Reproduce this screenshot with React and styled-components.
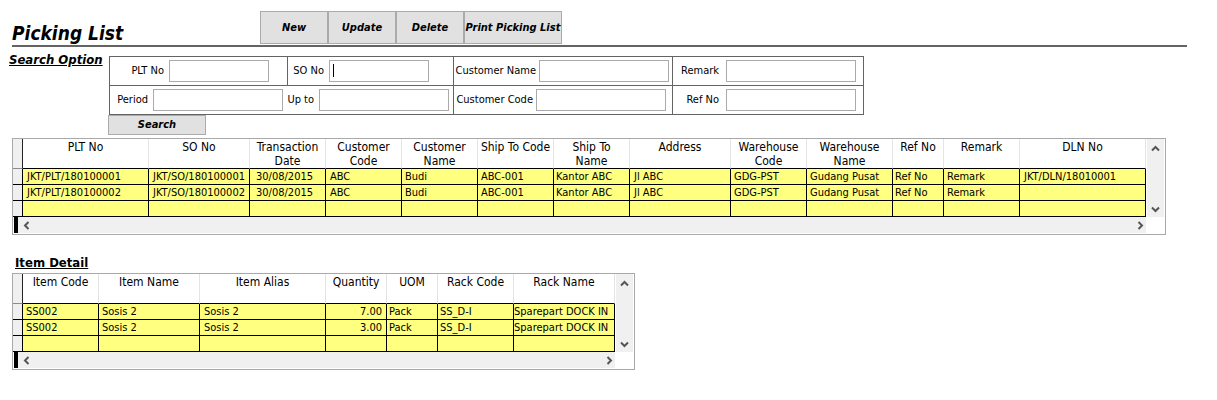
import React from "react";
import styled, { createGlobalStyle, css } from "styled-components";

const GlobalStyle = createGlobalStyle`
  *, *::before, *::after { box-sizing: border-box; }
  body {
    margin: 0;
    background: #fff;
    color: #000;
    font: 11px/14px Tahoma, "DejaVu Sans Condensed", "Noto Sans", sans-serif;
  }
  button, input { font: inherit; color: inherit; }
`;

const Page = styled.main`
  padding: 11px 30px 30px 12px;
`;

const TopBar = styled.header`
  display: flex;
  align-items: flex-end;
  padding-bottom: 1px;
  border-bottom: 2px solid #646464;
`;

const Title = styled.h1`
  width: 248px;
  margin: 0;
  font-size: 19px;
  line-height: 22px;
  font-weight: bold;
  font-style: italic;
`;

const Toolbar = styled.nav`
  display: flex;
`;

const Button = styled.button`
  width: ${(p) => (p.$wide ? 98 : 68)}px;
  height: ${(p) => (p.$short ? 20 : 33)}px;
  padding: 0;
  border: 1px solid #ababab;
  border-radius: 0;
  background: #e1e1e1;
  font-size: 11px;
  font-weight: bold;
  font-style: italic;
  white-space: nowrap;
`;

const SearchSection = styled.form`
  display: flex;
  align-items: flex-start;
  margin: 9px 0 3px;
`;

const SectionTitle = styled.h2`
  margin: 0;
  font-size: 13px;
  line-height: 16px;
  font-weight: bold;
  text-decoration: underline;
  white-space: nowrap;
`;

const SearchTitle = styled(SectionTitle)`
  width: 99px;
  margin: -4px 0 0 -3px;
  font-style: italic;
`;

const FieldGrid = styled.div`
  display: grid;
  grid-template-columns: 178px 166px 219px 191px;
  border: solid #646464;
  border-width: 1px 0 0 1px;
  margin-left: 1px;
`;

const Field = styled.div`
  display: flex;
  align-items: center;
  justify-content: flex-end;
  height: 29px;
  padding-right: ${(p) => p.$pad}px;
  border: solid #646464;
  border-width: 0 ${(p) => (p.$open ? 0 : 1)}px 1px 0;
  white-space: nowrap;
`;

const FieldLabel = styled.label`
  margin-right: ${(p) => p.$gap}px;
`;

const InputWrap = styled.span`
  position: relative;
  display: flex;
  ${(p) =>
    p.$caret &&
    css`
      &::after {
        content: "";
        position: absolute;
        left: 4px;
        top: 4px;
        width: 1px;
        height: 13px;
        background: #000;
      }
    `}
`;

const TextInput = styled.input`
  width: ${(p) => p.$width}px;
  height: 22px;
  padding: 0 4px;
  border: 1px solid #ababab;
  background: #fff;
  outline: none;
`;

const Panel = styled.section`
  display: ${(p) => (p.$fit ? "inline-grid" : "grid")};
  grid-template-columns: 1fr 19px;
  grid-template-rows: auto 17px;
  margin-right: ${(p) => (p.$fit ? 0 : 21)}px;
  border: 1px solid #a9a9a9;
  vertical-align: top;
`;

const Table = styled.table`
  width: ${(p) => (p.$width ? `${p.$width}px` : "100%")};
  table-layout: fixed;
  border-collapse: separate;
  border-spacing: 0;
`;

const HeadCell = styled.th`
  height: 30px;
  padding: 1px 0 0;
  border-right: 1px solid #e4e4e4;
  border-bottom: 1px solid #000;
  font-size: 12px;
  line-height: 14px;
  font-weight: normal;
  vertical-align: top;
  white-space: pre-line;
`;

const HeadSelector = styled.td`
  padding: 0;
  background: #f0f0f0;
  border-right: 1px solid #222;
  border-bottom: 1px solid #8c8c8c;
`;

const Cell = styled.td`
  height: 16px;
  padding: 0 ${(p) => (p.$right ? 4 : 0)}px 0 ${(p) => p.$indent ?? 3}px;
  overflow: hidden;
  background: #ffff80;
  border-right: 1px solid #000;
  border-bottom: 1px solid #000;
  line-height: 15px;
  text-align: ${(p) => (p.$right ? "right" : "left")};
  white-space: nowrap;
`;

const RowSelector = styled.td`
  padding: 0;
  background: #f0f0f0;
  border-right: 1px solid #000;
  border-bottom: 1px solid #000;
`;

const VScroll = styled.div`
  display: flex;
  flex-direction: column;
  justify-content: space-between;
  align-items: center;
  margin: 0 1px;
  padding: 5px 0 3px;
  background: #f0f0f0;
`;

const HScroll = styled.div`
  display: flex;
  justify-content: space-between;
  align-items: center;
  margin: 0 0 1px 1px;
  padding: 0 1px 0 4px;
  border-left: 4px solid #000;
  background: #f0f0f0;
`;

const ArrowButton = styled.button`
  display: flex;
  padding: 0;
  border: 0;
  background: none;
`;

const DetailTitle = styled(SectionTitle)`
  margin: 20px 0 2px 3px;
`;

const arrows = {
  up: "M1 6.5 4.5 3 8 6.5",
  down: "M1 2.5 4.5 6 8 2.5",
  left: "M6.5 1 3 4.5 6.5 8",
  right: "M2.5 1 6 4.5 2.5 8",
};

function Arrow({ dir }) {
  return (
    <ArrowButton type="button" aria-label={`Scroll ${dir}`}>
      <svg width="9" height="9" viewBox="0 0 9 9" fill="none" stroke="#555" strokeWidth="2">
        <path d={arrows[dir]} />
      </svg>
    </ArrowButton>
  );
}

function SearchField({ id, label, width, gap = 5, pad, open, caret }) {
  return (
    <Field $pad={pad} $open={open}>
      <FieldLabel htmlFor={id} $gap={gap}>{label}</FieldLabel>
      <InputWrap $caret={caret}>
        <TextInput id={id} type="text" $width={width} />
      </InputWrap>
    </Field>
  );
}

function DataGrid({ columns, rows, fit }) {
  const total = columns.reduce((sum, c) => sum + c.width, 10);
  return (
    <Panel $fit={fit}>
      <Table $width={fit && total}>
        <colgroup>
          <col width="10" />
          {columns.map((c) => <col key={c.label} width={c.width} />)}
        </colgroup>
        <thead>
          <tr>
            <HeadSelector />
            {columns.map((c) => <HeadCell key={c.label} scope="col">{c.label}</HeadCell>)}
          </tr>
        </thead>
        <tbody>
          {rows.map((row, i) => (
            <tr key={i}>
              <RowSelector />
              {columns.map((c, j) => (
                <Cell key={c.label} $right={c.right} $indent={c.indent}>{row[j]}</Cell>
              ))}
            </tr>
          ))}
        </tbody>
      </Table>
      <VScroll>
        <Arrow dir="up" />
        <Arrow dir="down" />
      </VScroll>
      <HScroll>
        <Arrow dir="left" />
        <Arrow dir="right" />
      </HScroll>
    </Panel>
  );
}

const pickingColumns = [
  { label: "PLT No", width: 126, indent: 4 },
  { label: "SO No", width: 101, indent: 4 },
  { label: "Transaction\nDate", width: 76, indent: 6 },
  { label: "Customer\nCode", width: 76, indent: 4 },
  { label: "Customer\nName", width: 76 },
  { label: "Ship To Code", width: 76 },
  { label: "Ship To\nName", width: 76, indent: 2 },
  { label: "Address", width: 101, indent: 4 },
  { label: "Warehouse\nCode", width: 76 },
  { label: "Warehouse\nName", width: 86 },
  { label: "Ref No", width: 51, indent: 2 },
  { label: "Remark", width: 76 },
  { label: "DLN No", width: 126, indent: 4 },
];

const pickingRows = [
  ["JKT/PLT/180100001", "JKT/SO/180100001", "30/08/2015", "ABC", "Budi", "ABC-001", "Kantor ABC", "Jl ABC", "GDG-PST", "Gudang Pusat", "Ref No", "Remark", "JKT/DLN/18010001"],
  ["JKT/PLT/180100002", "JKT/SO/180100002", "30/08/2015", "ABC", "Budi", "ABC-001", "Kantor ABC", "Jl ABC", "GDG-PST", "Gudang Pusat", "Ref No", "Remark", ""],
  [],
];

const itemColumns = [
  { label: "Item Code", width: 76 },
  { label: "Item Name", width: 101 },
  { label: "Item Alias", width: 126, indent: 4 },
  { label: "Quantity", width: 61, right: true },
  { label: "UOM", width: 51, indent: 2 },
  { label: "Rack Code", width: 76, indent: 2 },
  { label: "Rack Name", width: 101, indent: 0 },
];

const itemRows = [
  ["SS002", "Sosis 2", "Sosis 2", "7.00", "Pack", "SS_D-I", "Sparepart DOCK IN"],
  ["SS002", "Sosis 2", "Sosis 2", "3.00", "Pack", "SS_D-I", "Sparepart DOCK IN"],
  [],
];

export default function App() {
  return (
    <>
      <GlobalStyle />
      <Page>
        <TopBar>
          <Title>Picking List</Title>
          <Toolbar>
            <Button type="button">New</Button>
            <Button type="button">Update</Button>
            <Button type="button">Delete</Button>
            <Button type="button" $wide>Print Picking List</Button>
          </Toolbar>
        </TopBar>
        <SearchSection onSubmit={(e) => e.preventDefault()}>
          <SearchTitle>Search Option</SearchTitle>
          <div>
            <FieldGrid>
              <SearchField id="plt" label="PLT No" width={100} pad={18} />
              <SearchField id="so" label="SO No" width={100} pad={24} caret />
              <SearchField id="cname" label="Customer Name" width={130} gap={3} pad={3} />
              <SearchField id="remark" label="Remark" width={130} gap={7} pad={7} />
              <SearchField id="from" label="Period" width={130} pad={5} open />
              <SearchField id="to" label="Up to" width={130} gap={5} pad={4} />
              <SearchField id="ccode" label="Customer Code" width={130} gap={3} pad={6} />
              <SearchField id="ref" label="Ref No" width={130} gap={7} pad={7} />
            </FieldGrid>
            <Button type="submit" $wide $short>Search</Button>
          </div>
        </SearchSection>
        <DataGrid columns={pickingColumns} rows={pickingRows} />
        <DetailTitle>Item Detail</DetailTitle>
        <DataGrid columns={itemColumns} rows={itemRows} fit />
      </Page>
    </>
  );
}
